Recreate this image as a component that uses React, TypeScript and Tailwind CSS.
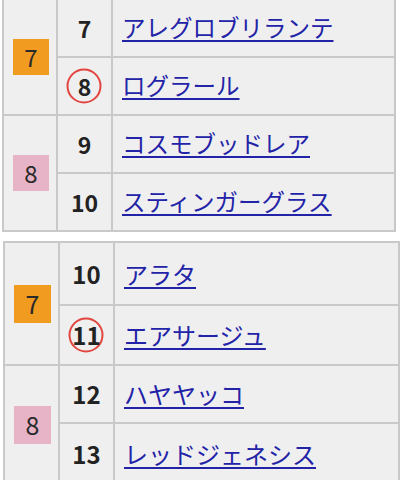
import React from 'react';

type Horse = { no: number; name: string; mark?: boolean };
type Group = { waku: number; horses: Horse[] };

const topGroups: Group[] = [
  { waku: 7, horses: [{ no: 7, name: 'アレグロブリランテ' }, { no: 8, name: 'ログラール', mark: true }] },
  { waku: 8, horses: [{ no: 9, name: 'コスモブッドレア' }, { no: 10, name: 'スティンガーグラス' }] },
];

const bottomGroups: Group[] = [
  { waku: 7, horses: [{ no: 10, name: 'アラタ' }, { no: 11, name: 'エアサージュ', mark: true }] },
  { waku: 8, horses: [{ no: 12, name: 'ハヤヤッコ' }, { no: 13, name: 'レッドジェネシス' }] },
];

const font = { fontFamily: '"Noto Sans CJK JP", "Noto Sans", sans-serif' };

// waku colour box
const Waku = ({ n, big }: { n: number; big?: boolean }) => (
  <div
    className={`flex items-center justify-center text-[#2a2a2a] ${big ? 'w-[37px] h-[38px] text-[25px]' : 'w-[36px] h-[36px] text-[24px]'} ${n === 7 ? 'bg-[#f19b20]' : 'bg-[#e7b4c7]'}`}
  >
    {n}
  </div>
);

const Num = ({ h, big }: { h: Horse; big?: boolean }) => (
  <div className={`relative flex items-center justify-center font-bold text-[#222] ${big ? 'text-[24px]' : 'text-[23px]'}`}>
    {h.mark && (
      <span className="absolute left-1/2 top-1/2 -translate-x-1/2 -translate-y-1/2 w-[35px] h-[35px] rounded-full border-2 border-[#e2453f]" />
    )}
    <span className="relative">{h.no}</span>
  </div>
);

function Table({ groups, big, rowHeights }: { groups: Group[]; big?: boolean; rowHeights: string[] }) {
  let idx = 0;
  return (
    <div
      className={`bg-[#efefef] border-[#c9c9c9] border-l-2 border-r-2 ${big ? 'ml-[3px] w-[397px] border-t-2' : 'ml-[2px] w-[394px] border-b-2'}`}
    >
      {groups.map((g, gi) => (
        <div key={gi} className={`flex ${gi > 0 ? 'border-t-2 border-[#c9c9c9]' : ''}`}>
          <div className={`${big ? 'w-[55px]' : 'w-[54px]'} shrink-0 border-r-2 border-[#c9c9c9] flex items-center justify-center pl-[2px]`}>
            <Waku n={g.waku} big={big} />
          </div>
          <div className="flex-1 flex flex-col">
            {g.horses.map((h, hi) => {
              const rh = rowHeights[idx++];
              return (
                <div key={hi} className={`flex ${rh} ${hi > 0 ? 'border-t-2 border-[#c9c9c9]' : ''}`}>
                  <div className="w-[55px] shrink-0 border-r-2 border-[#c9c9c9] flex items-center justify-center">
                    <Num h={h} big={big} />
                  </div>
                  <div className={`flex items-center pl-[9px] ${big ? 'text-[24px]' : 'text-[23.5px]'}`}>
                    <a href="#" className="text-[#2323a8] underline decoration-[1.5px] underline-offset-[3px] leading-none">
                      {h.name}
                    </a>
                  </div>
                </div>
              );
            })}
          </div>
        </div>
      ))}
    </div>
  );
}

export default function App() {
  return (
    <div className="w-[402px] h-[480px] overflow-hidden bg-white" style={font}>
      <Table groups={topGroups} rowHeights={['h-[56px]', 'h-[58px]', 'h-[56px]', 'h-[58px]']} />
      <div className="h-[9px]" />
      <Table groups={bottomGroups} big rowHeights={['h-[61px]', 'h-[60px]', 'h-[56px]', 'h-[62px]']} />
    </div>
  );
}
